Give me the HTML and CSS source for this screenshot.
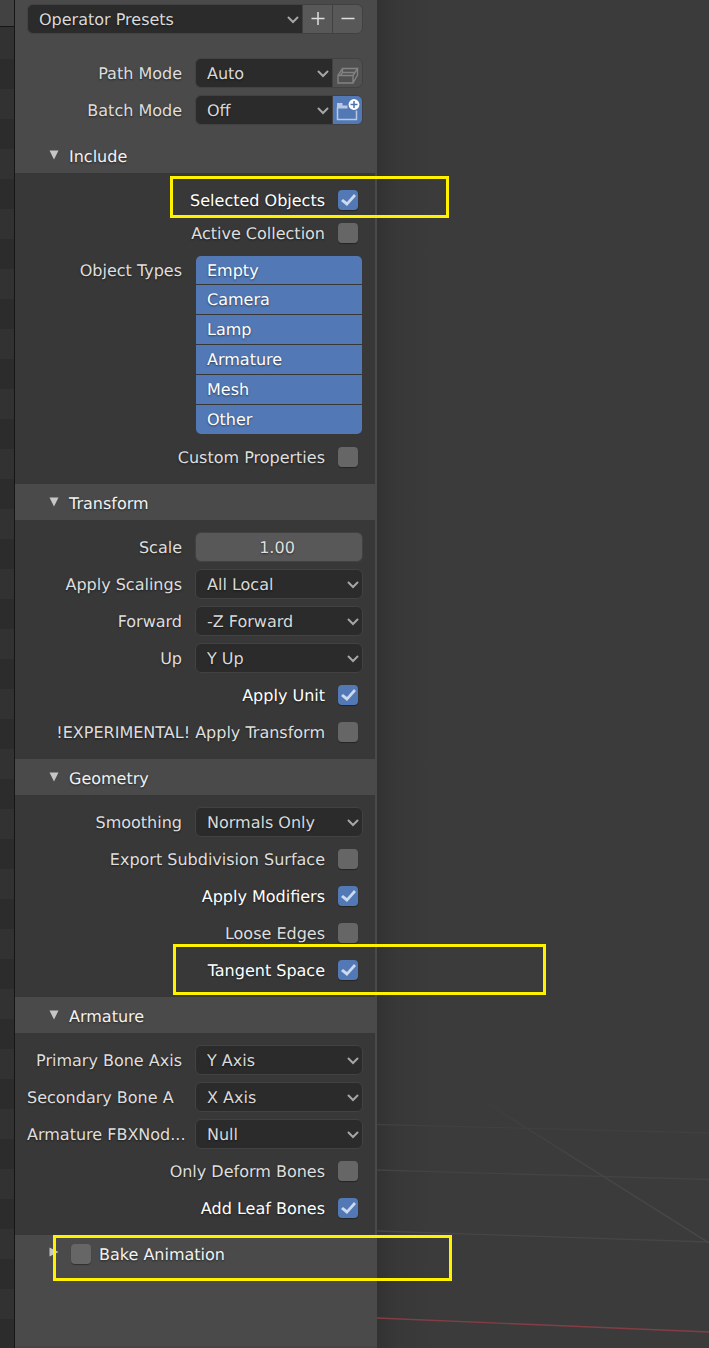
FILE: index.html
```html
<!DOCTYPE html>
<html lang="en">
<head>
<meta charset="utf-8">
<meta name="viewport" content="width=device-width, initial-scale=1">
<title>Export FBX</title>
<link rel="stylesheet" href="styles.css">
</head>
<body>
<svg class="symbols" aria-hidden="true">
  <symbol id="chevron" viewBox="0 0 12 8"><path d="M1.5 1.5 6 6l4.5-4.5" fill="none" stroke="currentColor" stroke-width="2" stroke-linecap="round"/></symbol>
  <symbol id="triangle" viewBox="0 0 10 10"><path d="M0.500 0.500h9L5 9.500z" fill="currentColor"/></symbol>
</svg>
<div class="app">
  <div class="file-list"></div>
  <main class="panel">
    <div class="settings">
      <div class="joined presets">
        <div class="dropdown"><select aria-label="Operator Presets"><option>Operator Presets</option></select><svg class="chevron"><use href="#chevron"/></svg></div>
        <button class="tool" type="button" aria-label="Add preset"><svg class="icon" viewBox="0 0 30 30"><path d="M15 8v13M8.500 14.500h13" stroke="#dedede" stroke-width="1.500"/></svg></button>
        <button class="tool" type="button" aria-label="Remove preset"><svg class="icon" viewBox="0 0 30 30"><path d="M8.500 14.500h13" stroke="#dedede" stroke-width="1.500"/></svg></button>
      </div>
      <div class="row">
        <label for="path-mode">Path Mode</label>
        <div class="joined">
          <div class="dropdown"><select id="path-mode"><option>Auto</option></select><svg class="chevron"><use href="#chevron"/></svg></div>
          <button class="tool disabled" type="button" aria-label="Embed textures" disabled><svg class="icon" viewBox="0 0 30 30"><path d="M5 17.500h15V25H5zM5 17.500l4.500-7h15l-4.500 7M24.500 10.500V17L20 25M9.500 10.500v4L7.500 17.500M9.500 14.500H22" fill="none" stroke="#828282" stroke-width="1.400"/></svg></button>
        </div>
      </div>
      <div class="row">
        <label for="batch-mode">Batch Mode</label>
        <div class="joined">
          <div class="dropdown"><select id="batch-mode"><option>Off</option></select><svg class="chevron"><use href="#chevron"/></svg></div>
          <button class="tool active" type="button" aria-label="Batch own directory" aria-pressed="true"><svg class="icon" viewBox="0 0 30 30"><path d="M4 8h5.500v2.500h5v3H4z" fill="#b9c9e4"/><path d="M4.500 12v12.500h19V15.500" fill="none" stroke="#b9c9e4" stroke-width="1.500"/><circle cx="21" cy="9.500" r="5.400" fill="#fff"/><path d="M21 6v7M17.500 9.500h7" stroke="#4a72b0" stroke-width="1.500"/></svg></button>
        </div>
      </div>
    </div>

    <section>
      <h2 class="heading"><svg class="triangle"><use href="#triangle"/></svg>Include</h2>
      <div class="body">
        <div class="group">
          <div class="check-row"><label for="selected">Selected Objects</label><input id="selected" type="checkbox" checked><span class="highlight highlight-selected"></span></div>
          <div class="check-row"><label for="collection">Active Collection</label><input id="collection" type="checkbox"></div>
        </div>
        <div class="row">
          <span class="label" id="types-label">Object Types</span>
          <div class="types" role="group" aria-labelledby="types-label">
            <button type="button" aria-pressed="true">Empty</button>
            <button type="button" aria-pressed="true">Camera</button>
            <button type="button" aria-pressed="true">Lamp</button>
            <button type="button" aria-pressed="true">Armature</button>
            <button type="button" aria-pressed="true">Mesh</button>
            <button type="button" aria-pressed="true">Other</button>
          </div>
        </div>
        <div class="check-row"><label for="custom">Custom Properties</label><input id="custom" type="checkbox"></div>
      </div>
    </section>

    <section>
      <h2 class="heading"><svg class="triangle"><use href="#triangle"/></svg>Transform</h2>
      <div class="body">
        <div class="row"><label for="scale">Scale</label><input class="number" id="scale" type="text" value="1.00"></div>
        <div class="row"><label for="scalings">Apply Scalings</label><div class="dropdown"><select id="scalings"><option>All Local</option></select><svg class="chevron"><use href="#chevron"/></svg></div></div>
        <div class="row"><label for="forward">Forward</label><div class="dropdown"><select id="forward"><option>-Z Forward</option></select><svg class="chevron"><use href="#chevron"/></svg></div></div>
        <div class="row"><label for="up">Up</label><div class="dropdown"><select id="up"><option>Y Up</option></select><svg class="chevron"><use href="#chevron"/></svg></div></div>
        <div class="check-row"><label for="unit">Apply Unit</label><input id="unit" type="checkbox" checked></div>
        <div class="check-row"><label for="experimental">!EXPERIMENTAL! Apply Transform</label><input id="experimental" type="checkbox"></div>
      </div>
    </section>

    <section>
      <h2 class="heading"><svg class="triangle"><use href="#triangle"/></svg>Geometry</h2>
      <div class="body">
        <div class="row"><label for="smoothing">Smoothing</label><div class="dropdown"><select id="smoothing"><option>Normals Only</option></select><svg class="chevron"><use href="#chevron"/></svg></div></div>
        <div class="check-row"><label for="subdivision">Export Subdivision Surface</label><input id="subdivision" type="checkbox"></div>
        <div class="check-row"><label for="modifiers">Apply Modifiers</label><input id="modifiers" type="checkbox" checked></div>
        <div class="check-row"><label for="loose">Loose Edges</label><input id="loose" type="checkbox"></div>
        <div class="check-row"><label for="tangent">Tangent Space</label><input id="tangent" type="checkbox" checked><span class="highlight highlight-tangent"></span></div>
      </div>
    </section>

    <section>
      <h2 class="heading"><svg class="triangle"><use href="#triangle"/></svg>Armature</h2>
      <div class="body">
        <div class="row"><label for="primary">Primary Bone Axis</label><div class="dropdown"><select id="primary"><option>Y Axis</option></select><svg class="chevron"><use href="#chevron"/></svg></div></div>
        <div class="row"><label class="cut" for="secondary">Secondary Bone A</label><div class="dropdown"><select id="secondary"><option>X Axis</option></select><svg class="chevron"><use href="#chevron"/></svg></div></div>
        <div class="row"><label for="fbxnode">Armature FBXNod...</label><div class="dropdown"><select id="fbxnode"><option>Null</option></select><svg class="chevron"><use href="#chevron"/></svg></div></div>
        <div class="check-row"><label for="deform">Only Deform Bones</label><input id="deform" type="checkbox"></div>
        <div class="check-row"><label for="leaf">Add Leaf Bones</label><input id="leaf" type="checkbox" checked></div>
      </div>
    </section>

    <div class="heading bake"><svg class="triangle closed"><use href="#triangle"/></svg><input id="bake" type="checkbox"><label for="bake">Bake Animation</label><span class="highlight highlight-bake"></span></div>
  </main>

  <div class="viewport">
    <svg class="grid" viewBox="0 0 332 268" preserveAspectRatio="none" aria-hidden="true">
      <defs><linearGradient id="fade" gradientUnits="userSpaceOnUse" x1="105" y1="20" x2="332" y2="163"><stop offset="0" stop-color="#3c3c3c"/><stop offset="0.400" stop-color="#444"/><stop offset="1" stop-color="#4a4a4a"/></linearGradient></defs>
      <g fill="none" stroke-width="1.300">
        <path d="M0 44.500 332 53" stroke="#404040"/>
        <path d="M0 90 332 99.500" stroke="#434343"/>
        <path d="M0 151 332 162" stroke="#464646"/>
        <path d="M105 20 332 163" stroke="url(#fade)"/>
        <path d="M0 238 332 252" stroke="#853d45"/>
      </g>
    </svg>
  </div>
</div>
</body>
</html>
```

FILE: styles.css
```css
* {
  box-sizing: border-box;
}

body {
  margin: 0;
  background: #3b3b3b;
  color: #dedede;
  font: 16px/20px "DejaVu Sans", sans-serif;
  text-rendering: geometricPrecision;
}

button,
input,
select {
  margin: 0;
  font: inherit;
  color: inherit;
  text-rendering: inherit;
  text-shadow: inherit;
}

.symbols {
  position: absolute;
  width: 0;
  height: 0;
}

.app {
  display: grid;
  grid-template-columns: 15px minmax(0, 362fr) minmax(0, 332fr);
  min-height: 100vh;
}

.file-list {
  border-right: 1px solid #161616;
  background:
    linear-gradient(#424242 26px, #161616 26px 27px, #323232 27px 59px, transparent 59px),
    repeating-linear-gradient(#2c2c2c 0 30px, #323232 30px 60px) 0 59px;
}

.panel {
  position: relative;
  z-index: 1;
  border-bottom: 2px solid #474445;
  background: #4a4a4a;
  text-shadow: 0 1px 2px rgba(0, 0, 0, 0.5);
}

.settings {
  display: flex;
  flex-direction: column;
  gap: 7px;
  padding: 4px 14px 12px 12px;
}

.presets {
  margin-bottom: 17px;
}

.heading {
  display: flex;
  align-items: center;
  height: 36px;
  margin: 0;
  padding: 3px 14px 0 34px;
  color: #f2f2f2;
  font-size: 16px;
  font-weight: 400;
}

.triangle {
  width: 10px;
  height: 10px;
  margin: 0 10px 4px 0;
  color: #c6c6c6;
}

.body {
  display: flex;
  flex-direction: column;
  gap: 7px;
  margin-right: 2px;
  padding: 12px;
  background: #383838;
}

.group {
  display: flex;
  flex-direction: column;
  gap: 3px;
}

.row {
  display: grid;
  grid-template-columns: minmax(0, 155fr) minmax(0, 168fr);
  gap: 13px;
}

.row > label,
.label {
  height: 30px;
  line-height: 32px;
  text-align: right;
  white-space: nowrap;
}

.row > .cut {
  text-align: left;
}

.joined {
  display: flex;
}

.dropdown {
  position: relative;
  flex: 1;
  min-width: 0;
}

.dropdown select {
  display: block;
  width: 100%;
  height: 30px;
  padding: 2px 26px 0 11px;
  border: 1px solid #424242;
  border-radius: 6px;
  appearance: none;
  background: #2b2b2b;
  color: #d9d9d9;
}

.joined select {
  border-right: 0;
  border-radius: 6px 0 0 6px;
}

.chevron {
  position: absolute;
  top: 12px;
  right: 4px;
  width: 12px;
  height: 8px;
  color: #a6a6a6;
  pointer-events: none;
}

.tool {
  position: relative;
  width: 31px;
  height: 30px;
  margin-left: -1px;
  padding: 0;
  border: 1px solid #414141;
  background: #585858;
}

.tool:last-child {
  border-radius: 0 6px 6px 0;
}

.icon {
  display: block;
  width: 30px;
  height: 30px;
  margin: -1px 0;
}

.tool.disabled {
  background: #505050;
}

.tool.active {
  background: #5279b5;
}

.number {
  width: 100%;
  height: 30px;
  padding: 0 12px 0 8px;
  border: 1px solid #424242;
  border-radius: 6px;
  background: #585858;
  text-align: center;
}

.types {
  display: flex;
  flex-direction: column;
  gap: 1px;
  padding: 1px;
}

.types button {
  height: 29px;
  padding: 0 11px;
  border: 0;
  background: #5279b5;
  color: #fff;
  text-align: left;
}

.types button:first-child {
  height: 28px;
  padding-top: 2px;
  border-radius: 5px 5px 0 0;
}

.types button:last-child {
  border-radius: 0 0 5px 5px;
}

.check-row {
  position: relative;
  display: flex;
  align-items: center;
  justify-content: flex-end;
  gap: 13px;
  height: 30px;
  padding-right: 5px;
  white-space: nowrap;
}

.check-row label {
  padding-top: 2px;
}

.check-row:has(:checked) {
  color: #fff;
}

input[type="checkbox"] {
  flex: none;
  width: 20px;
  height: 20px;
  border-radius: 4px;
  appearance: none;
  background: #666;
  box-shadow: 0 1px 1px rgba(0, 0, 0, 0.35);
}

input[type="checkbox"]:checked {
  background: #5279b5;
}

input[type="checkbox"]:checked::after {
  content: "";
  display: block;
  width: 20px;
  height: 20px;
  background: #cdd9ec;
  clip-path: polygon(3px 11px, 5px 9px, 9px 12px, 16px 4px, 18px 6px, 9px 16px);
}

.bake {
  position: relative;
  padding-top: 1px;
}

.bake .closed {
  margin-right: 12px;
  transform: rotate(-90deg);
}

.bake label {
  margin-left: 8px;
  padding-top: 2px;
}

.highlight {
  position: absolute;
  z-index: 2;
  border: 3px solid #fff200;
  pointer-events: none;
}

.highlight-selected {
  top: -9px;
  left: 143px;
  width: 279px;
  height: 42px;
}

.highlight-tangent {
  top: -11px;
  left: 146px;
  width: 373px;
  height: 51px;
}

.highlight-bake {
  top: 0;
  left: 38px;
  width: 399px;
  height: 46px;
}

.viewport {
  display: flex;
  align-items: flex-end;
  background: linear-gradient(90deg, #323232, #383838 20px, #3b3b3b 60px);
}

.grid {
  width: 100%;
  height: 268px;
}
```
